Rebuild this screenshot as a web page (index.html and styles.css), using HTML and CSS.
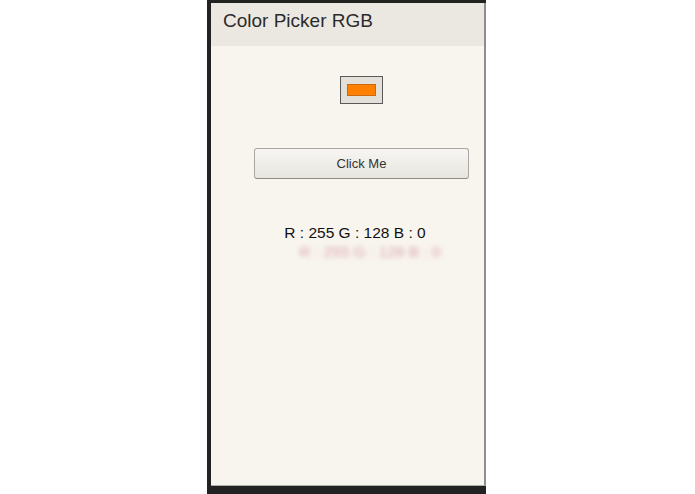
FILE: index.html
```html
<!DOCTYPE html>
<html>
<head>
<meta charset="utf-8">
<title>Color Picker RGB</title>
<link rel="stylesheet" href="styles.css">
</head>
<body>
<div class="frame">
  <div class="panel">
    <div class="header">Color Picker RGB</div>
    <div class="content">
      <div class="swatch"><div class="swatch-color"></div></div>
      <button class="btn">Click Me</button>
      <p class="rgb">R : 255 G : 128 B : 0</p>
    </div>
  </div>
</div>
</body>
</html>
```

FILE: styles.css
```css
html, body {
  margin: 0;
  padding: 0;
  background: #ffffff;
}

body {
  font-family: "Liberation Sans", Arial, sans-serif;
  width: 695px;
  height: 494px;
  overflow: hidden;
}

.frame {
  margin-left: 207px;
  width: 279px;
  height: 494px;
  background: #222222;
  box-sizing: border-box;
  padding: 3px 0 8px 4px;
  display: flex;
}

.panel {
  flex: 1;
  display: flex;
  flex-direction: column;
  background: #f8f5ef;
  border-right: 2px solid #8e8e8e;
  border-bottom: 1px solid #b0aeaa;
}

.header {
  height: 43px;
  box-sizing: border-box;
  padding: 7px 0 0 12px;
  background: #ebe8e2;
  color: #2b2b2b;
  font-size: 19px;
  line-height: 22px;
}

.content {
  display: flex;
  flex-direction: column;
  align-items: center;
  padding-left: 28px;
}

.swatch {
  margin-top: 30px;
  width: 43px;
  height: 28px;
  box-sizing: border-box;
  border: 1px solid #5a5a5a;
  background: #e3e0da;
  display: flex;
  align-items: center;
  justify-content: center;
}

.swatch-color {
  width: 29px;
  height: 12px;
  box-sizing: border-box;
  background: #ff8000;
  border: 1px solid #c96a10;
}

.btn {
  margin-top: 44px;
  width: 215px;
  height: 31px;
  box-sizing: border-box;
  border: 1px solid #a9a7a3;
  border-bottom-color: #8f8d89;
  border-radius: 3px;
  background: linear-gradient(#f7f6f2, #e8e5df);
  color: #333333;
  font-family: "Liberation Sans", Arial, sans-serif;
  font-size: 13px;
  padding: 0;
}

.rgb {
  margin: 45px 13px 0 0;
  font-size: 15.5px;
  line-height: 18px;
  color: #111111;
  text-shadow: 15px 19px 5px rgba(200, 110, 135, 0.6);
}
```
